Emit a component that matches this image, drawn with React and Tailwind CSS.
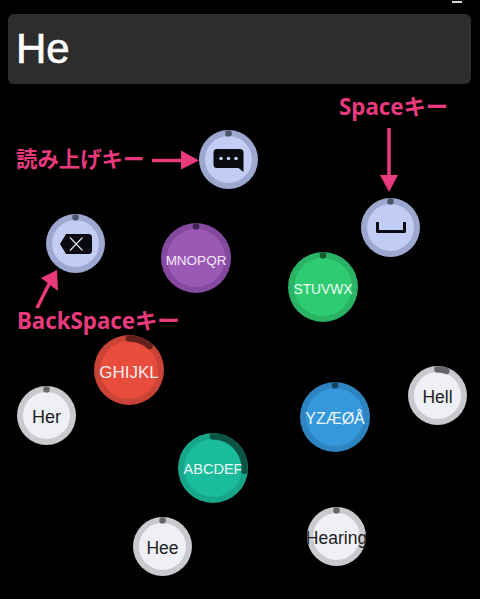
import React from 'react';

const SANS = 'font-["Liberation_Sans",Arial,sans-serif]';
const LABEL = 'font-["Noto_Sans","Noto_Sans_CJK_JP",sans-serif]';

const RING = 6;

// progress arc, sweep in degrees clockwise from the top
const arcPath = (size, sweep) => {
  const c = size / 2;
  const r = c - 3.5;
  const a = (sweep * Math.PI) / 180;
  const x = c + r * Math.sin(a);
  const y = c - r * Math.cos(a);
  return `M${c} ${c - r}A${r} ${r} 0 ${sweep > 180 ? 1 : 0} 1 ${x.toFixed(2)} ${y.toFixed(2)}`;
};

const SpeakIcon = () => (
  <svg width="32" height="26" viewBox="0 0 32 26" className="mt-[2px] ml-[1px]">
    <path d="M4 1h23a3.5 3.5 0 0 1 3.5 3.5V24l-5-4H4a3.5 3.5 0 0 1-3.5-3.5v-12A3.500 3.500 0 0 1 4 1z" fill="#0a0a10" />
    <circle cx="8" cy="10.500" r="1.800" fill="#c3cff5" />
    <circle cx="15.500" cy="10.500" r="1.800" fill="#c3cff5" />
    <circle cx="23" cy="10.500" r="1.800" fill="#c3cff5" />
  </svg>
);

const BackspaceIcon = () => (
  <svg width="34" height="22" viewBox="0 0 34 22" className="mr-[-1px]">
    <path d="M7 1h22.500A3.500 3.500 0 0 1 33 4.500v13a3.500 3.500 0 0 1-3.500 3.500H7l-6-10z" fill="#0a0a10" />
    <path d="M11 4.500l12.500 13M23.500 4.500L11 17.500" stroke="#dfe5fa" strokeWidth="1.100" fill="none" />
  </svg>
);

const SpaceIcon = () => (
  <svg width="30" height="12" viewBox="0 0 30 12" className="mt-[1px]">
    <path d="M1.500 1v8.500h27V1" stroke="#0a0a10" strokeWidth="3" fill="none" strokeLinejoin="round" strokeLinecap="round" />
  </svg>
);

const keys = [
  { id: 'speak', pos: 'left-[199px] top-[130px]', size: 59, outer: 'bg-[#9ca8cf]', inner: 'bg-[#c1cdf4]', icon: <SpeakIcon /> },
  { id: 'back', pos: 'left-[46px] top-[214px]', size: 59, outer: 'bg-[#9ca8cf]', inner: 'bg-[#c1cdf4]', icon: <BackspaceIcon /> },
  { id: 'space', pos: 'left-[361px] top-[198px]', size: 59, outer: 'bg-[#9ca8cf]', inner: 'bg-[#c1cdf4]', icon: <SpaceIcon /> },
  { id: 'mnopqr', pos: 'left-[161px] top-[223px]', size: 70, outer: 'bg-[#8549a0]', inner: 'bg-[#9b59b6]', text: 'MNOPQR', type: 'pt-[6px] text-[13.500px] text-[#f3eaf6]' },
  { id: 'stuvwx', pos: 'left-[288px] top-[252px]', size: 70, outer: 'bg-[#2ab365]', inner: 'bg-[#2ecc71]', text: 'STUVWX', type: 'pt-[6px] text-[13.800px] text-[#f2fbf5]' },
  { id: 'ghijkl', pos: 'left-[94px] top-[335px]', size: 70, outer: 'bg-[#c94336]', inner: 'bg-[#e74c3c]', text: 'GHIJKL', type: 'pt-[5px] text-[17px] text-[#fdeeec]', sweep: 41 },
  { id: 'her', pos: 'left-[17px] top-[386px]', size: 59, outer: 'bg-[#c9cacd]', inner: 'bg-[#eff0f5]', text: 'Her', type: 'pt-[3px] text-[18px] text-[#1c1c1e]' },
  { id: 'abcdef', pos: 'left-[178px] top-[433px]', size: 70, outer: 'bg-[#17a689]', inner: 'bg-[#1abc9c]', text: 'ABCDEF', type: 'pt-[3px] text-[14.500px] text-[#eafaf6]', sweep: 95 },
  { id: 'hee', pos: 'left-[133px] top-[517px]', size: 59, outer: 'bg-[#c9cacd]', inner: 'bg-[#eff0f5]', text: 'Hee', type: 'pt-[3px] text-[17.500px] text-[#1c1c1e]' },
  { id: 'yz', pos: 'left-[300px] top-[382px]', size: 70, outer: 'bg-[#2d84c0]', inner: 'bg-[#3498db]', text: 'YZÆØÅ', type: 'pt-[4px] text-[16px] text-[#eef6fc]' },
  { id: 'hell', pos: 'left-[408px] top-[366px]', size: 59, outer: 'bg-[#c9cacd]', inner: 'bg-[#eff0f5]', text: 'Hell', type: 'pt-[3px] text-[17.500px] text-[#1c1c1e]', sweep: 20 },
  { id: 'hearing', pos: 'left-[307px] top-[507px]', size: 59, outer: 'bg-[#c9cacd]', inner: 'bg-[#eff0f5]', text: 'Hearing', type: 'pt-[3px] text-[17.500px] text-[#1c1c1e]' },
];

const Key = ({ item }) => {
  const { pos, size, outer, inner, icon, text, type, sweep = 0 } = item;
  return (
    <div className={`absolute ${pos} rounded-full overflow-hidden ${outer}`} style={{ width: size, height: size, padding: RING }}>
      <div className={`w-full h-full rounded-full flex items-center justify-center ${inner}`}>
        {icon}
        {text && <span className={`whitespace-nowrap ${SANS} ${type}`}>{text}</span>}
      </div>
      <svg className="absolute inset-0" width={size} height={size} viewBox={`0 0 ${size} ${size}`}>
        <path d={arcPath(size, sweep)} stroke="#000" strokeOpacity="0.5" strokeWidth="6.500" strokeLinecap="round" fill="none" />
      </svg>
    </div>
  );
};

const Arrows = () => (
  <>
    <svg className="absolute left-[150px] top-[148px]" width="50" height="24" viewBox="0 0 50 24">
      <path d="M2 12.500h31" stroke="#e83a7c" strokeWidth="3.500" />
      <path d="M31 2.500L49 12.500 31 21.500z" fill="#e83a7c" />
    </svg>
    <svg className="absolute left-[378px] top-[126px]" width="22" height="68" viewBox="0 0 22 68">
      <path d="M11 2v50" stroke="#e83a7c" strokeWidth="3.500" />
      <path d="M2 49h18L11 66z" fill="#e83a7c" />
    </svg>
    <svg className="absolute left-[32px] top-[266px]" width="30" height="44" viewBox="0 0 30 44">
      <path d="M5 42l13-26" stroke="#e83a7c" strokeWidth="3.500" />
      <path d="M9 12L25 4l1 21z" fill="#e83a7c" />
    </svg>
  </>
);

const Annotation = ({ pos, children }) => (
  <span className={`absolute ${pos} ${LABEL} leading-none font-bold text-[#e83a7c] whitespace-nowrap`}>
    {children}
  </span>
);

export default function App() {
  return (
    <div className="relative w-[480px] h-[599px] bg-black overflow-hidden">
      <div className="absolute left-[452px] top-[1px] w-[10px] h-[2px] bg-[#d8d8d8]" />
      <div className="pt-[14px] px-2">
        <div className={`h-[70px] w-[463px] rounded-[6px] bg-[#2c2d2c] flex items-center pl-2 ${SANS}`}>
          <span className="text-[42px] leading-none text-white [-webkit-text-stroke:0.7px_white]">He</span>
        </div>
      </div>

      {keys.map(item => <Key key={item.id} item={item} />)}

      <Annotation pos="left-[16px] top-[148px] text-[21.400px]">読み上げキー</Annotation>
      <Annotation pos="left-[339px] top-[96px] text-[22.300px]">Spaceキー</Annotation>
      <Annotation pos="left-[17px] top-[310px] text-[22.300px]">BackSpaceキー</Annotation>
      <Arrows />
    </div>
  );
}
